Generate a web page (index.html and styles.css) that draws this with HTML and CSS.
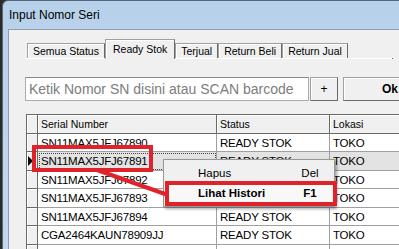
FILE: index.html
```html
<!DOCTYPE html>
<html>
  <head>
    <meta charset="utf-8" />
    <title>Input Nomor Seri</title>
    <link rel="stylesheet" href="styles.css">
  </head>

  <body>
    <div class="window">
      <div class="titlebar">Input Nomor Seri</div>

      <div class="client">
        <!-- tab filter status -->
        <div class="tabs">
          <div class="tab">Semua Status</div>
          <div class="tab active">Ready Stok</div>
          <div class="tab">Terjual</div>
          <div class="tab">Return Beli</div>
          <div class="tab">Return Jual</div>
        </div>
        <div class="tabline"></div>

        <!-- input scan -->
        <div class="scan">
          <div class="input">Ketik Nomor SN disini atau SCAN barcode</div>
          <button class="btn plus">+</button>
          <button class="btn ok">Ok</button>
        </div>

        <!-- grid nomor seri -->
        <div class="grid">
          <div class="row head">
            <div class="cell rh"></div>
            <div class="cell">Serial Number</div>
            <div class="cell">Status</div>
            <div class="cell">Lokasi</div>
          </div>
          <div class="row">
            <div class="cell rh"></div>
            <div class="cell">SN11MAX5JFJ67890</div>
            <div class="cell">READY STOK</div>
            <div class="cell">TOKO</div>
          </div>
          <div class="row sel">
            <div class="cell rh"></div>
            <div class="cell focus">SN11MAX5JFJ67891</div>
            <div class="cell">READY STOK</div>
            <div class="cell">TOKO</div>
          </div>
          <div class="row">
            <div class="cell rh"></div>
            <div class="cell">SN11MAX5JFJ67892</div>
            <div class="cell">READY STOK</div>
            <div class="cell">TOKO</div>
          </div>
          <div class="row">
            <div class="cell rh"></div>
            <div class="cell">SN11MAX5JFJ67893</div>
            <div class="cell">READY STOK</div>
            <div class="cell">TOKO</div>
          </div>
          <div class="row">
            <div class="cell rh"></div>
            <div class="cell">SN11MAX5JFJ67894</div>
            <div class="cell">READY STOK</div>
            <div class="cell">TOKO</div>
          </div>
          <div class="row">
            <div class="cell rh"></div>
            <div class="cell">CGA2464KAUN78909JJ</div>
            <div class="cell">READY STOK</div>
            <div class="cell">TOKO</div>
          </div>
          <div class="row">
            <div class="cell rh"></div>
            <div class="cell">CGA2464KAUN78910JJ</div>
            <div class="cell">READY STOK</div>
            <div class="cell">TOKO</div>
          </div>
        </div>
      </div>
    </div>

    <!-- menu klik kanan -->
    <div class="menu">
      <div class="menu-item">
        <span class="label">Hapus</span>
        <span class="key">Del</span>
      </div>
      <div class="menu-item hot">
        <span class="label">Lihat Histori</span>
        <span class="key">F1</span>
      </div>
    </div>

    <!-- tanda merah -->
    <svg class="arrow" width="399" height="249" viewBox="0 0 399 249">
      <line x1="97" y1="170" x2="168" y2="195" stroke="#e0232b" stroke-width="4" />
    </svg>
    <div class="mark mark-cell"></div>
    <div class="mark mark-item"></div>
  </body>
</html>
```

FILE: styles.css
```css
/* halaman */
body {
  margin: 0;
  width: 399px;
  height: 249px;
  overflow: hidden;
  position: relative;
  background: #2d2a27;
  font-family: "Liberation Sans", Arial, sans-serif;
  color: #000;
}

/* jendela */
.window {
  margin-left: 2px;
  height: 249px;
  box-sizing: border-box;
  border-top: 1px solid #56677b;
  border-left: 1px solid #56677b;
  border-top-left-radius: 6px;
  background: linear-gradient(#b8d1ea, #c2d8ee);
  padding-left: 5px;
  display: flex;
  flex-direction: column;
}
.titlebar {
  height: 28px;
  line-height: 28px;
  padding-left: 1px;
  font-size: 12px;
}
.client {
  flex: 1;
  background: #f0f0f0;
  border-top: 1px solid #8e9eb0;
  border-left: 1px solid #8e9eb0;
  padding: 9px 0 0 16px;
  overflow: hidden;
}

/* tab */
.tabs {
  display: flex;
  align-items: flex-end;
  height: 19px;
  padding-left: 2px;
}
.tab {
  height: 15px;
  box-sizing: border-box;
  padding: 0 5px;
  font-size: 10.5px;
  line-height: 14px;
  white-space: nowrap;
  border: 1px solid #a0a0a0;
  border-bottom: 0;
  border-right-color: #696969;
  box-shadow: inset 1px 1px 0 #fff;
  background: #f0f0f0;
}
.tab.active {
  height: 20px;
  line-height: 18px;
  padding: 0 7px;
  margin-bottom: -1px;
  position: relative;
}
.tabline {
  width: 367px;
  height: 1px;
  background: #fff;
  border-right: 1px solid #696969;
}

/* input scan */
.scan {
  display: flex;
  margin-top: 18px;
}
.input {
  flex: none;
  width: 284px;
  height: 24px;
  box-sizing: border-box;
  border: 1px solid #abadb3;
  border-top-color: #8a8a8a;
  background: #fff;
  color: #7d7d7d;
  font-size: 14px;
  line-height: 22px;
  padding-left: 3px;
  white-space: nowrap;
}
.btn {
  flex: none;
  height: 24px;
  box-sizing: border-box;
  padding: 0;
  border: 1px solid #a0a0a0;
  border-right-color: #696969;
  border-bottom-color: #696969;
  box-shadow: inset 1px 1px 0 #fff;
  background: #f0f0f0;
  font-family: inherit;
  color: #000;
}
.plus {
  width: 28px;
  margin-left: 1px;
  font-size: 12px;
}
.ok {
  width: 94px;
  margin-left: 5px;
  font-size: 12px;
  font-weight: bold;
}

/* grid */
.grid {
  width: 420px;
  margin: 13px 0 0 1px;
  border-top: 1px solid #696969;
  border-left: 1px solid #696969;
  background: #fff;
}
.row {
  display: grid;
  grid-template-columns: 11px 179px 113px 1fr;
  height: 18.5px;
}
.cell {
  box-sizing: border-box;
  border-right: 1px solid #a0a0a0;
  border-bottom: 1px solid #a0a0a0;
  padding-left: 3px;
  font-size: 11.5px;
  letter-spacing: -0.2px;
  line-height: 18px;
  white-space: nowrap;
  overflow: hidden;
}
.cell.rh {
  padding: 0;
  background: #f0f0f0;
  border-right-color: #696969;
  border-bottom-color: #696969;
  box-shadow: inset 1px 1px 0 #fff;
}
.head .cell {
  background: #f0f0f0;
  border-right-color: #696969;
  border-bottom-color: #696969;
  box-shadow: inset 1px 1px 0 #fff;
  font-size: 10.5px;
  letter-spacing: 0;
}
.sel .cell {
  background: #e3e3e3;
}
.sel .cell.rh {
  background: #f0f0f0;
  display: flex;
  align-items: center;
  padding-left: 1px;
}
/* segitiga penanda baris aktif */
.sel .cell.rh::after {
  content: "";
  border-left: 5px solid #000;
  border-top: 5px solid transparent;
  border-bottom: 5px solid transparent;
}
.focus {
  outline: 1px dotted #444;
  outline-offset: -2px;
}

/* menu klik kanan */
.menu {
  position: absolute;
  left: 163px;
  top: 159px;
  width: 172px;
  height: 48px;
  box-sizing: border-box;
  border: 1px solid #979797;
  background: #f0f0f0;
  padding: 3px 2px;
  box-shadow: 2px 2px 3px rgba(0, 0, 0, 0.35);
  font-size: 11.5px;
}
.menu-item {
  display: flex;
  align-items: center;
  height: 20px;
  padding: 0 11px 0 32px;
}
.menu-item .label {
  flex: 1;
}
.menu-item .key {
  width: 22px;
  text-align: center;
}
.menu-item.hot {
  font-weight: bold;
  background: #f8f8f8;
}

/* tanda merah */
.arrow {
  position: absolute;
  left: 0;
  top: 0;
}
.mark {
  position: absolute;
  box-sizing: border-box;
  border: 4px solid #e0232b;
}
.mark-cell {
  left: 32px;
  top: 145px;
  width: 121px;
  height: 27px;
}
.mark-item {
  left: 165px;
  top: 181px;
  width: 172px;
  height: 25px;
}
```
